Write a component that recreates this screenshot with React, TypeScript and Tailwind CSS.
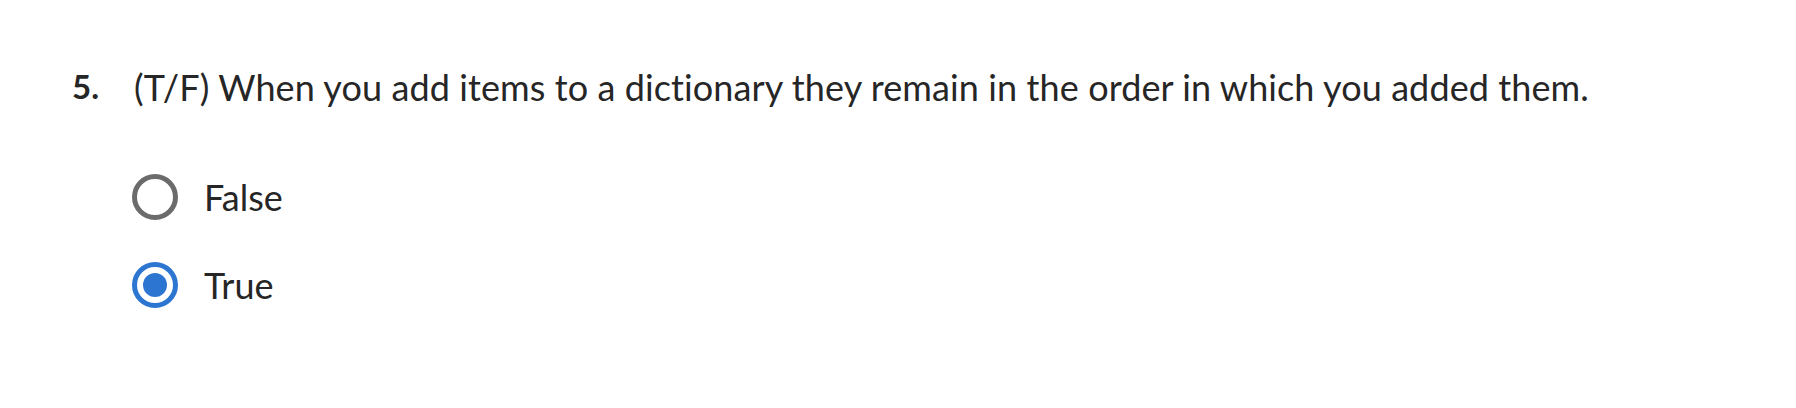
import React from "react";

type Option = {
  id: string;
  label: string;
};

const options: Option[] = [
  { id: "false", label: "False" },
  { id: "true", label: "True" },
];

function Radio({ checked }: { checked: boolean }) {
  if (checked) {
    return (
      <span className="flex h-[46px] w-[46px] shrink-0 items-center justify-center rounded-full border-[5px] border-[#2c76d2]">
        <span className="h-[24px] w-[24px] rounded-full bg-[#2c76d2]" />
      </span>
    );
  }
  return (
    <span className="h-[46px] w-[46px] shrink-0 rounded-full border-[5px] border-[#6b6b6b]" />
  );
}

function App() {
  const [answer, setAnswer] = React.useState("true");

  return (
    <div className="min-h-screen bg-white font-['Lato',sans-serif] text-[#262626]">
      <div className="flex pl-[72px] pt-[64px]">
        <div className="w-[62px] pt-[2px] text-[33px] font-bold leading-[40px]">5.</div>
        <div className="text-[36px] leading-[46px] tracking-[0.1px]">
          (T/F) When you add items to a dictionary they remain in the order in which you added them.
        </div>
      </div>
      <div className="mt-[64px] flex flex-col gap-[42px] pl-[132px]">
        {options.map(o => (
          <label
            key={o.id}
            className="flex cursor-pointer items-center gap-[26px] text-[36px] leading-[46px]"
            onClick={() => setAnswer(o.id)}
          >
            <Radio checked={answer === o.id} />
            <span>{o.label}</span>
          </label>
        ))}
      </div>
    </div>
  );
}

export default App;
